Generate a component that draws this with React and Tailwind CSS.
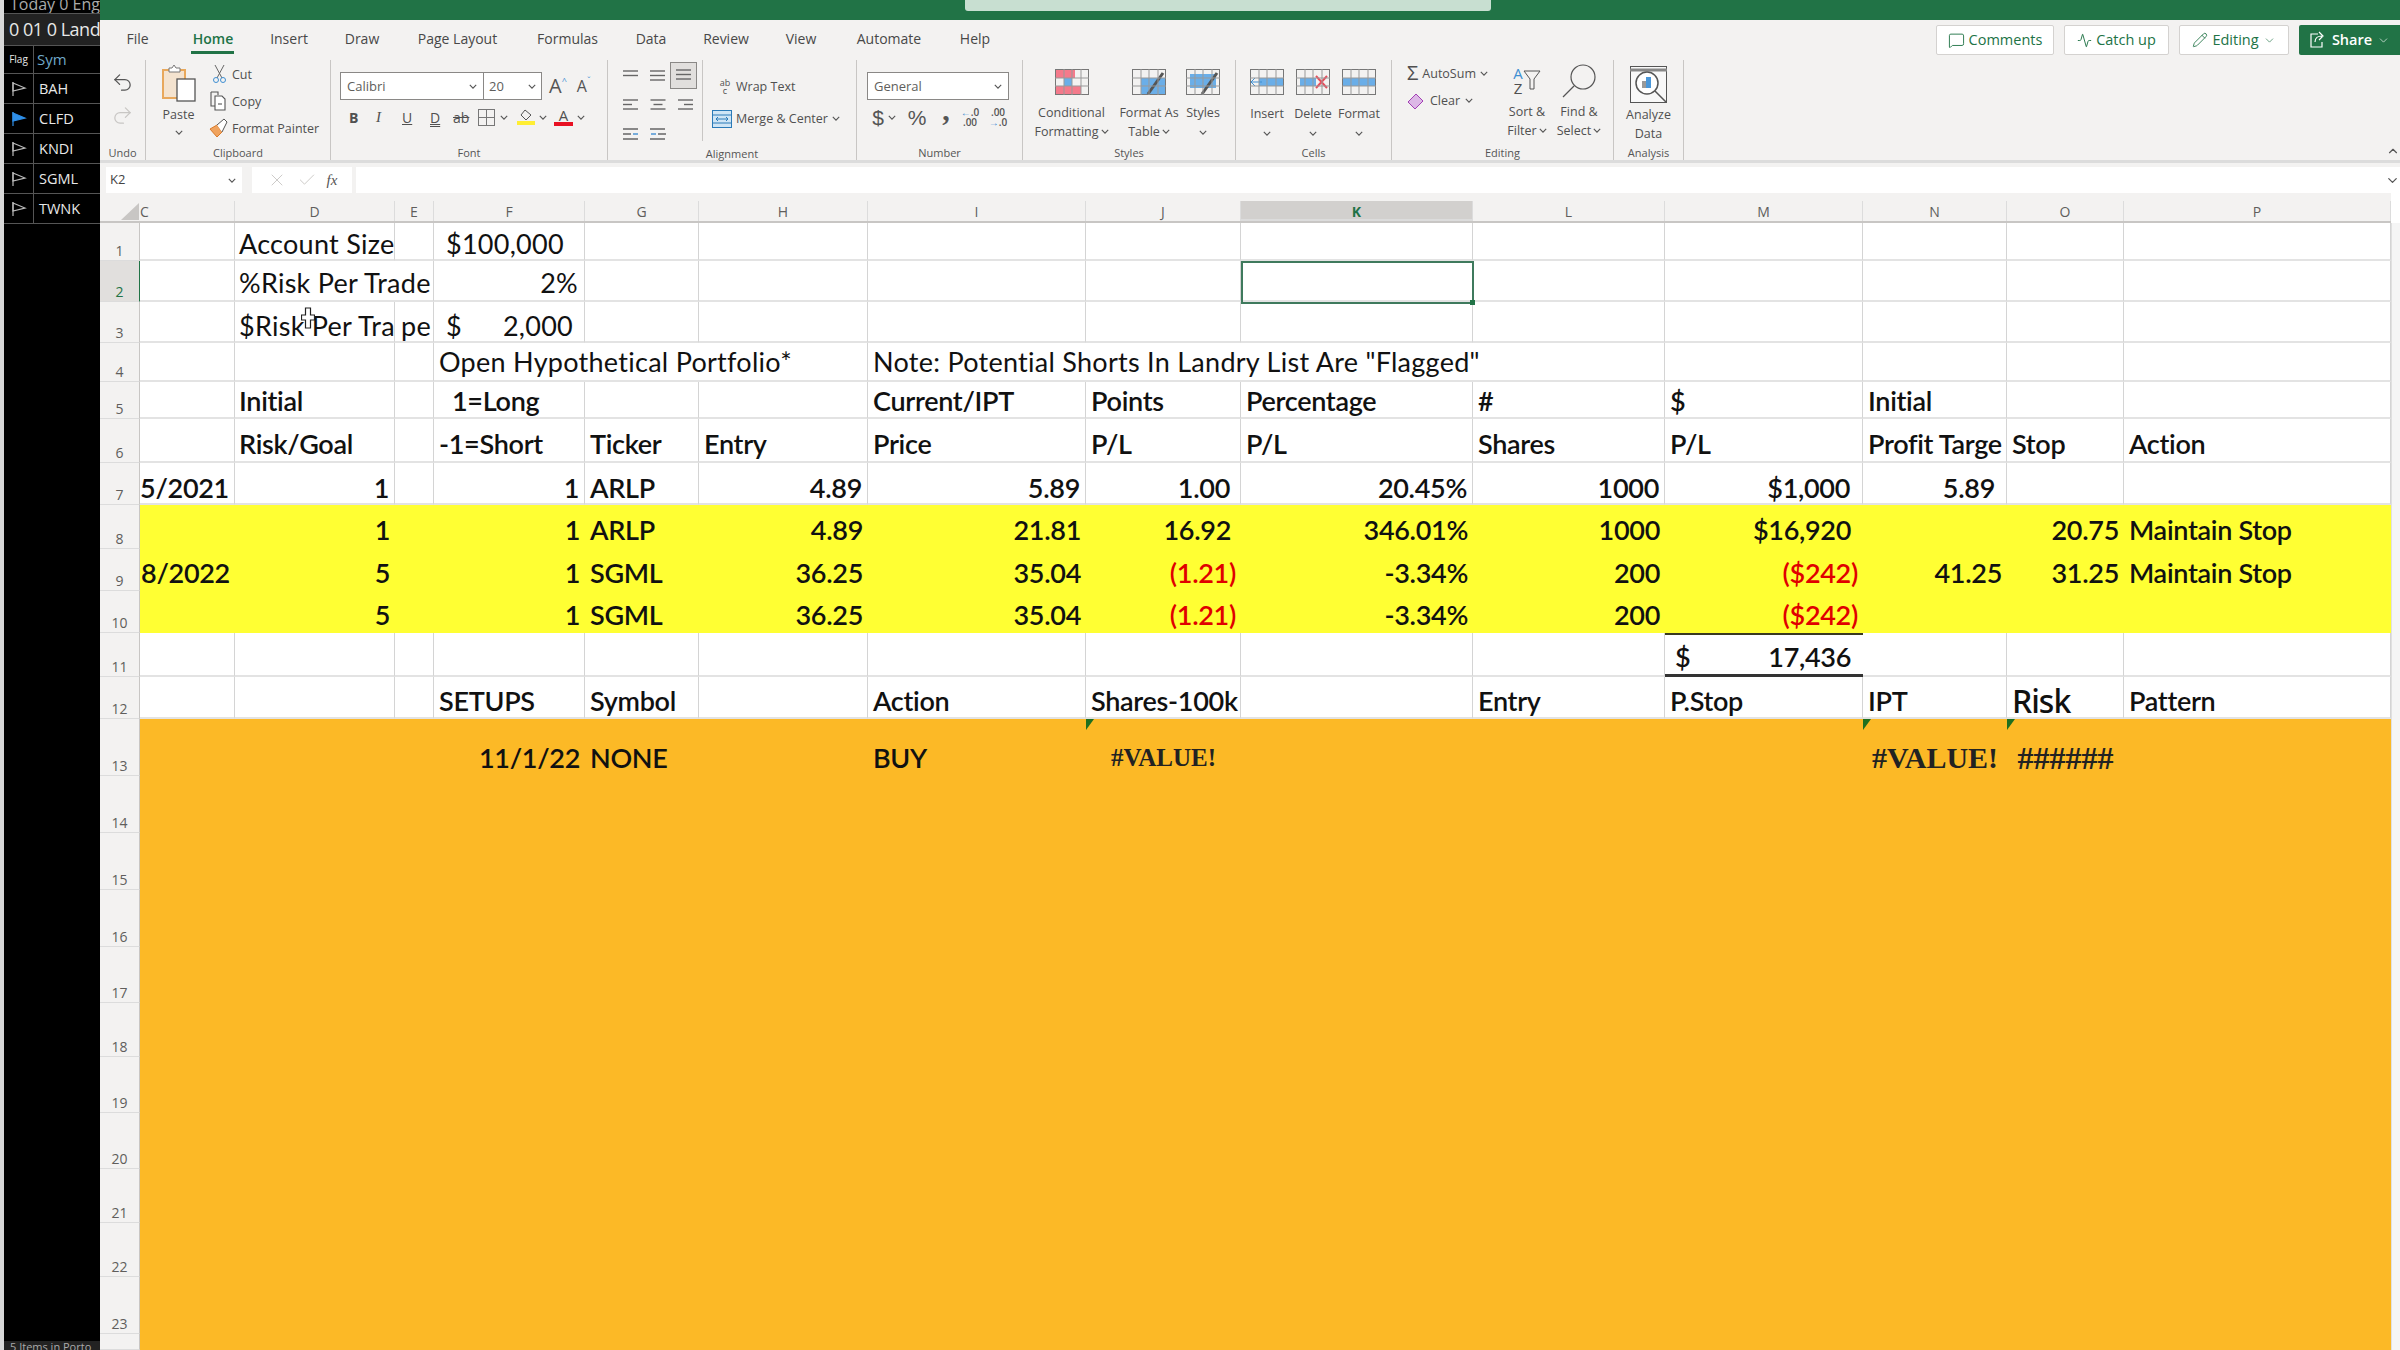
import React from 'react';
import { MessageSquare, Activity, Pencil, ChevronDown, ChevronUp, Undo2, Redo2, X, Check } from 'lucide-react';

const Chev = ({ c = '' }) => (
  <svg viewBox="0 0 10 6" className={'w-[8px] h-[5px] shrink-0 ' + c} fill="none" stroke="#555" strokeWidth="1.4"><path d="M1 1l4 4 4-4" /></svg>
);

const Lines = ({ w = [15, 15, 15], align = 'l' }) => (
  <svg width="16" height="14" viewBox="0 0 16 14" stroke="#666" strokeWidth="1.4">
    {w.map((n, i) => {
      const x = align === 'l' ? 0 : align === 'r' ? 16 - n : (16 - n) / 2;
      return <line key={i} x1={x} x2={x + n} y1={2 + i * 4.5} y2={2 + i * 4.5} />;
    })}
  </svg>
);

const Grid = ({ cls = 'w-[34px] h-[26px]', children, vb = '0 0 34 26' }) => (
  <svg viewBox={vb} className={cls} fill="none">
    {children}
    <rect x="0.5" y="0.5" width="33" height="25" stroke="#777" />
    <path d="M0 9h34M0 17h34M9 0v26M17 0v26M26 0v26" stroke="#999" />
  </svg>
);

const Group = ({ w, label, children }) => (
  <div className={'flex flex-col border-r border-[#c8c6c4] ' + w}>
    <div className="h-[87px] flex">{children}</div>
    <div className="h-[14px] text-center text-[11px] leading-[14px] text-[#555]">{label}</div>
  </div>
);

const tabs = [
  ['File', 'w-[75px]'], ['Home', 'w-[76px]'], ['Insert', 'w-[76px]'], ['Draw', 'w-[70px]'], ['Page Layout', 'w-[121px]'],
  ['Formulas', 'w-[99px]'], ['Data', 'w-[68px]'], ['Review', 'w-[82px]'], ['View', 'w-[68px]'], ['Automate', 'w-[108px]'], ['Help', 'w-[64px]'],
];

function Ribbon() {
  return (
    <div className="h-[143px] bg-[#f3f2f1] flex flex-col text-[#505050] shrink-0 border-b-[3px] border-[#dcdcdc]">
      <div className="h-[40px] flex shrink-0">
        {tabs.map(([t, w]) => (
          <div key={t} className={'relative h-[36px] flex justify-center items-center text-[14px] ' + w + (t === 'Home' ? ' text-[#217346] font-semibold' : ' text-[#484848]')}>
            {t}
            {t === 'Home' && <div className="absolute bottom-[2px] left-[16px] right-[17px] h-[3px] bg-[#217346]" />}
          </div>
        ))}
        <div className="ml-auto flex gap-[10px] mt-[5px] h-[30px] text-[14.5px] text-[#217346]">
          <div className="w-[118px] bg-white border border-[#d4d2d0] rounded-[2px] flex items-center justify-center gap-[4px]"><MessageSquare size={17} strokeWidth={1.3} />Comments</div>
          <div className="w-[105px] bg-white border border-[#d4d2d0] rounded-[2px] flex items-center justify-center gap-[4px]"><Activity size={15} strokeWidth={1.5} />Catch up</div>
          <div className="w-[110px] bg-white border border-[#d4d2d0] rounded-[2px] flex items-center justify-center gap-[4px]"><Pencil size={16} strokeWidth={1.3} />Editing<ChevronDown size={13} strokeWidth={1.2} /></div>
          <div className="w-[101px] bg-[#217346] text-white font-semibold rounded-l-[2px] flex items-center justify-center gap-[5px]">
            <svg width="18" height="18" viewBox="0 0 18 18" fill="none" stroke="#fff" strokeWidth="1.2"><path d="M9 3H2v13h11v-5M6 11c0-4 3-6 7-6M10 1l4 4-4 4" /></svg>
            Share<ChevronDown size={13} strokeWidth={1.2} />
          </div>
        </div>
      </div>
      <div className="h-[100px] flex text-[12.5px] leading-[19px]">
        <Group w="w-[46px]" label="Undo">
          <div className="w-full flex flex-col items-center pt-[11px] gap-[10px]">
            <Undo2 size={23} strokeWidth={1.3} color="#555" />
            <Redo2 size={23} strokeWidth={1.3} color="#c8c6c4" />
          </div>
        </Group>
        <Group w="w-[185px]" label="Clipboard">
          <div className="w-[64px] flex flex-col items-center pl-[1px] pt-[4px]">
            <svg width="36" height="38" viewBox="0 0 36 38" fill="none">
              <rect x="2" y="6" width="22" height="28" fill="#f4e3cf" stroke="#e8a85c" strokeWidth="2" />
              <path d="M8 7V4h3l2-3 2 3h4v4H8z" fill="#fff" stroke="#777" />
              <rect x="16" y="15" width="18" height="22" fill="#fff" stroke="#555" strokeWidth="1.3" />
            </svg>
            <div className="mt-[5px] leading-[16px]">Paste</div>
            <Chev c="mt-[7px]" />
          </div>
          <div className="flex flex-col pt-[4px] gap-[7px] whitespace-nowrap">
            <div className="flex items-center gap-[5px] pl-[2px]">
              <svg width="15" height="20" viewBox="0 0 15 20" fill="none"><path d="M3 1l7 13M12 1L5 14" stroke="#666" /><circle cx="4" cy="16" r="2.5" stroke="#3f8fd2" /><circle cx="11" cy="16" r="2.5" stroke="#3f8fd2" /></svg>Cut
            </div>
            <div className="flex items-center gap-[5px]">
              <svg width="17" height="20" viewBox="0 0 17 20" fill="none" stroke="#555" strokeWidth="1.1"><path d="M1 1h7v3M1 1v14h4" /><path d="M5 5h7l3 3v11H5z" fill="#fff" /><path d="M8 13h4" /></svg>Copy
            </div>
            <div className="flex items-center gap-[3px] -ml-[1px]">
              <svg width="20" height="20" viewBox="0 0 20 20" fill="none"><path d="M1 11l7-4 5 7-5 5z" fill="#f0a35e" stroke="#d97a2b" /><path d="M8 7l7-6 3 3-5 10" stroke="#555" fill="#fff" /></svg>Format Painter
            </div>
          </div>
        </Group>
        <Group w="w-[277px]" label="Font">
          <div className="pl-[9px] pt-[12px] flex flex-col">
            <div className="flex items-center">
              <div className="w-[202px] h-[28px] bg-white border border-[#8a8886] flex items-center text-[13px] text-[#605e5c]">
                <div className="w-[143px] h-full flex items-center justify-between pl-[6px] pr-[6px] border-r border-[#8a8886]">Calibri<Chev /></div>
                <div className="flex-1 flex items-center justify-between pl-[5px] pr-[5px]">20<Chev /></div>
              </div>
              <div className="ml-[7px] text-[20px] leading-[20px] text-[#555] flex items-start">A<span className="text-[9px] leading-[9px] text-[#3f8fd2]">^</span></div>
              <div className="ml-[10px] text-[16px] leading-[20px] text-[#555] flex items-start">A<span className="text-[9px] leading-[9px] text-[#3f8fd2]">ˇ</span></div>
            </div>
            <div className="flex items-center mt-[4px] h-[26px] text-[14px] text-[#505050]">
              <span className="w-[26px] pl-[9px] font-bold">B</span>
              <span className="w-[27px] pl-[10px] italic font-['Liberation_Serif',serif] text-[15px]">I</span>
              <span className="w-[28px] pl-[9px] underline">U</span>
              <span className="w-[26px] pl-[9px] underline decoration-double">D</span>
              <span className="w-[30px] pl-[6px] line-through">ab</span>
              <svg width="17" height="17" viewBox="0 0 17 17" fill="none" stroke="#777" className="ml-[1px]"><rect x=".5" y=".5" width="16" height="16" /><path d="M8.5 0v17M0 8.5h17" /></svg>
              <Chev c="ml-[5px]" />
              <div className="ml-[9px] w-[18px] flex flex-col items-center">
                <svg width="14" height="12" viewBox="0 0 14 12" fill="none" stroke="#555"><path d="M6 1l6 5-5 5-5-5z" /></svg>
                <div className="w-[18px] h-[4px] bg-[#ffee33]" />
              </div>
              <Chev c="ml-[4px]" />
              <div className="ml-[7px] w-[19px] flex flex-col items-center leading-[13px] text-[15px]">A<div className="w-[19px] h-[4px] bg-[#e81123]" /></div>
              <Chev c="ml-[4px]" />
            </div>
          </div>
        </Group>
        <Group w="w-[249px]" label="Alignment">
          <div className="pl-[15px] pt-[1px] w-[95px] border-r border-[#c8c6c4] mb-[6px] shrink-0">
            <div className="grid grid-cols-[27px_27px_27px] grid-rows-[29px_30px_28px] items-center">
              <Lines w={[15, 15, 0]} />
              <Lines w={[15, 15, 15]} />
              <div className="-ml-[7px] -mt-[1px] w-[27px] h-[27px] bg-[#e1dfdd] border border-[#8a8886] flex items-center justify-center"><Lines w={[15, 15, 15]} /></div>
              <Lines w={[15, 9, 15]} />
              <Lines w={[15, 9, 15]} align="c" />
              <Lines w={[15, 9, 15]} align="r" />
              <svg width="16" height="14" viewBox="0 0 16 14" stroke="#666" strokeWidth="1.4"><path d="M0 2h15M0 7h8M0 12h15" /><path d="M15 7h-5" stroke="#3f8fd2" /></svg>
              <svg width="16" height="14" viewBox="0 0 16 14" stroke="#666" strokeWidth="1.4"><path d="M0 2h15M8 7h8M0 12h15" /><path d="M1 7h5" stroke="#3f8fd2" /></svg>
            </div>
          </div>
          <div className="flex flex-col pl-[9px] pt-[17px] gap-[13px] whitespace-nowrap">
            <div className="flex items-center gap-[4px] pl-[6px]">
              <span className="text-[9px] leading-[8px] w-[14px] text-center">ab<br />c</span>Wrap Text
            </div>
            <div className="flex items-center gap-[4px]">
              <svg width="20" height="18" viewBox="0 0 20 18" fill="#cfe5f5" stroke="#2a7ab8"><rect x=".5" y=".5" width="19" height="17" /><path d="M0 5h20M0 13h20M4 9h12M6 7L4 9l2 2M14 7l2 2-2 2" fill="none" /></svg>
              Merge &amp; Center<Chev />
            </div>
          </div>
        </Group>
        <Group w="w-[166px]" label="Number">
          <div className="pl-[10px] pt-[12px] flex flex-col">
            <div className="w-[142px] h-[28px] bg-white border border-[#8a8886] flex items-center justify-between pl-[6px] pr-[6px] text-[13px] text-[#605e5c]">General<Chev /></div>
            <div className="flex items-center mt-[4px] h-[26px] text-[#555]">
              <span className="text-[21px] w-[22px] text-center font-['Liberation_Sans',sans-serif]">$</span>
              <Chev c="ml-[-1px]" />
              <span className="text-[21px] w-[42px] text-center font-['Liberation_Sans',sans-serif] font-light">%</span>
              <span className="text-[30px] leading-[18px] w-[16px] text-center font-bold font-['Liberation_Serif',serif] -mt-[14px]">,</span>
              <span className="ml-[5px] text-[10px] font-semibold leading-[10px] w-[22px] text-center"><span className="text-[#3f8fd2]">←</span>.0<br />.00</span>
              <span className="ml-[6px] text-[10px] font-semibold leading-[10px] w-[22px] text-center">.00<br /><span className="text-[#3f8fd2]">→</span>.0</span>
            </div>
          </div>
        </Group>
        <Group w="w-[213px]" label="Styles">
          <div className="w-full flex text-center leading-[19px]">
            <div className="w-[97px] flex flex-col items-center pt-[9px] shrink-0">
              <Grid><rect x="0" y="0" width="20" height="9" fill="#f47a8b" /><rect x="9" y="9" width="8" height="8" fill="#6aaee8" /><rect x="0" y="17" width="26" height="9" fill="#f47a8b" /></Grid>
              <div className="mt-[8px] whitespace-nowrap">Conditional</div>
              <div className="flex items-center gap-[2px] whitespace-nowrap">Formatting<Chev /></div>
            </div>
            <div className="w-[58px] flex flex-col items-center pt-[9px] shrink-0">
              <Grid><rect x="9" y="9" width="25" height="17" fill="#6aaee8" /><path d="M16 25L31 4" stroke="#555" strokeWidth="3" /></Grid>
              <div className="mt-[8px] whitespace-nowrap">Format As</div>
              <div className="flex items-center gap-[2px] whitespace-nowrap">Table<Chev /></div>
            </div>
            <div className="w-[50px] flex flex-col items-center pt-[9px] shrink-0">
              <Grid><rect x="4" y="5" width="26" height="14" fill="#6aaee8" /><path d="M16 25L31 4" stroke="#555" strokeWidth="3" /></Grid>
              <div className="mt-[8px]">Styles</div>
              <Chev c="mt-[8px]" />
            </div>
          </div>
        </Group>
        <Group w="w-[156px]" label="Cells">
          <div className="w-full flex text-center pl-[8px]">
            {[
              ['Insert', <Grid key="i"><rect x="9" y="9" width="25" height="8" fill="#6aaee8" /><path d="M0 13h12M5 9l-4 4 4 4" stroke="#3f8fd2" /></Grid>],
              ['Delete', <Grid key="d"><rect x="4" y="9" width="16" height="8" fill="#6aaee8" /><path d="M20 7l11 12M31 7L20 19" stroke="#ea4a5a" strokeWidth="2" /></Grid>],
              ['Format', <Grid key="f"><rect x="0" y="9" width="34" height="8" fill="#6aaee8" /></Grid>],
            ].map(([t, ic]) => (
              <div key={t} className="w-[46px] flex flex-col items-center pt-[9px] shrink-0">
                {ic}
                <div className="mt-[9px]">{t}</div>
                <Chev c="mt-[8px]" />
              </div>
            ))}
          </div>
        </Group>
        <Group w="w-[222px]" label="Editing">
          <div className="w-[108px] pl-[15px] pt-[3px] flex flex-col gap-[8px] shrink-0 whitespace-nowrap">
            <div className="flex items-center gap-[4px]"><span className="text-[20px] leading-[20px]">Σ</span>AutoSum<Chev /></div>
            <div className="flex items-center gap-[5px]">
              <svg width="18" height="18" viewBox="0 0 18 18" fill="#dcb8e6" stroke="#a33fb5"><path d="M1 10l8-8 7 7-8 8z" /></svg>Clear<Chev />
            </div>
          </div>
          <div className="w-[54px] flex flex-col items-center pt-[3px] shrink-0">
            <div className="flex h-[35px] items-center">
              <div className="text-[15px] leading-[15px] text-center"><span className="text-[#3f8fd2]">A</span><br />Z</div>
              <svg width="18" height="22" viewBox="0 0 18 22" fill="none" stroke="#555"><path d="M1 1h16l-6 8v10H7V9z" /></svg>
            </div>
            <div className="mt-[4px]">Sort &amp;</div>
            <div className="flex items-center gap-[2px]">Filter<Chev /></div>
          </div>
          <div className="w-[50px] flex flex-col items-center pt-[3px] shrink-0">
            <svg width="35" height="35" viewBox="0 0 35 35" fill="none" stroke="#555" strokeWidth="1.2"><circle cx="21" cy="14" r="12" /><path d="M12 23L1 34" /></svg>
            <div className="mt-[4px]">Find &amp;</div>
            <div className="flex items-center gap-[2px]">Select<Chev /></div>
          </div>
        </Group>
        <Group w="w-[70px]" label="Analysis">
          <div className="w-full flex flex-col items-center pt-[6px] text-center">
            <svg width="37" height="37" viewBox="0 0 37 37" fill="none" stroke="#555">
              <rect x=".5" y=".5" width="36" height="36" fill="#f8f8f8" />
              <path d="M0 4h37" stroke="#888" strokeWidth="3" />
              <circle cx="17" cy="17" r="11" fill="#fff" strokeWidth="1.5" />
              <rect x="12" y="15" width="4" height="7" fill="#999" stroke="none" /><rect x="16" y="11" width="5" height="11" fill="#4a96d8" stroke="none" />
              <path d="M25 25l11 11" strokeWidth="1.5" />
            </svg>
            <div className="mt-[2px]">Analyze</div>
            <div>Data</div>
          </div>
        </Group>
        <div className="flex-1 flex flex-col justify-end items-end pb-[2px]"><ChevronUp size={14} color="#555" /></div>
      </div>
    </div>
  );
}

function FormulaBar() {
  return (
    <div className="h-[30px] bg-[#f3f2f1] flex items-stretch pt-[4px] shrink-0">
      <div className="ml-[6px] w-[136px] bg-white flex items-center justify-between pl-[4px] pr-[6px] text-[13px] text-[#444]">K2<Chev /></div>
      <div className="ml-[10px] w-[100px] bg-white flex items-center justify-center gap-[10px] text-[#c8c6c4]">
        <X size={20} strokeWidth={1.1} /><Check size={20} strokeWidth={1.1} />
        <span className="text-[#555] italic font-['Liberation_Serif',serif] text-[15px]">fx</span>
      </div>
      <div className="ml-[4px] flex-1 bg-white flex items-center justify-end"><ChevronDown size={15} color="#555" /></div>
    </div>
  );
}

const cols = ['C', 'D', 'E', 'F', 'G', 'H', 'I', 'J', 'K', 'L', 'M', 'N', 'O', 'P'];
const rowNums = Array.from({ length: 24 }, (_, i) => i + 1);

const R = 'r', L = 'l';
const REG = 'font-normal tracking-[0.27px]';
const RED = 'text-[#e00000]';
const data = {
  1: { D: ['Account Size', L, REG + ' !pl-[4px]'], F: ['$100,000', L, REG + ' !pl-[12px]'] },
  2: { D: ['%Risk Per Trade', L, REG + ' !pl-[4px]', true], F: ['2%', R, REG + ' !pr-[6px]'] },
  3: { D: ['$Risk Per Tra', L, REG + ' !pl-[4px]'], E: ['pe', L, REG + ' !pl-[6px]'], F: ['$', L, REG + ' !pl-[12px]', false, '2,000'] },
  4: { F: ['Open Hypothetical Portfolio*', L, REG, true], G: ['', L, '', true], I: ['Note: Potential Shorts In Landry List Are "Flagged"', L, REG, true], J: ['', L, '', true], K: ['', L, '', true] },
  5: { D: ['Initial', L, '!pl-[4px]'], F: ['1=Long', L, '!pl-[18px]'], I: ['Current/IPT'], J: ['Points'], K: ['Percentage'], L: ['#'], M: ['$'], N: ['Initial'] },
  6: { D: ['Risk/Goal', L, '!pl-[4px]'], F: ['-1=Short'], G: ['Ticker'], H: ['Entry'], I: ['Price'], J: ['P/L'], K: ['P/L'], L: ['Shares'], M: ['P/L'], N: ['Profit Targe', L, 'overflow-hidden'], O: ['Stop'], P: ['Action'] },
  7: { C: ['5/2021', R, 'overflow-hidden'], D: ['1', R], F: ['1', R], G: ['ARLP'], H: ['4.89', R], I: ['5.89', R], J: ['1.00', R, '!pr-[10px]'], K: ['20.45%', R], L: ['1000', R], M: ['$1,000', R, '!pr-[12px]'], N: ['5.89', R, '!pr-[11px]'] },
  8: { D: ['1', R], F: ['1', R], G: ['ARLP'], H: ['4.89', R], I: ['21.81', R], J: ['16.92', R, '!pr-[10px]'], K: ['346.01%', R], L: ['1000', R], M: ['$16,920', R, '!pr-[12px]'], O: ['20.75', R], P: ['Maintain Stop'] },
  9: { C: ['8/2022', R], D: ['5', R], F: ['1', R], G: ['SGML'], H: ['36.25', R], I: ['35.04', R], J: ['(1.21)', R, RED], K: ['-3.34%', R], L: ['200', R], M: ['($242)', R, RED], N: ['41.25', R], O: ['31.25', R], P: ['Maintain Stop'] },
  10: { D: ['5', R], F: ['1', R], G: ['SGML'], H: ['36.25', R], I: ['35.04', R], J: ['(1.21)', R, RED], K: ['-3.34%', R], L: ['200', R], M: ['($242)', R, RED] },
  12: { F: ['SETUPS'], G: ['Symbol'], I: ['Action'], J: ['Shares-100k'], L: ['Entry'], M: ['P.Stop'], N: ['IPT'], O: ['Risk', L, "text-[32px] font-['Noto_Sans',sans-serif] font-medium tracking-[-1px]"], P: ['Pattern'] },
  13: { F: ['11/1/22', R], G: ['NONE'], I: ['BUY'] },
};

const rowPb = { 1: 'pb-0', 2: 'pb-[2px]', 3: 'pb-0', 4: 'pb-[3px]', 5: 'pb-[1px]', 6: 'pb-[2px]', 7: 'pb-0', 8: 'pb-[4px]', 9: 'pb-[3px]', 10: 'pb-[3px]', 12: 'pb-[1px]', 13: 'pb-[3px]' };
const rowBg = (r) => (r >= 8 && r <= 10 ? 'bg-[#ffff33]' : r >= 13 ? 'bg-[#fcb926]' : 'bg-white');

const Tri = () => <div className="absolute left-0 top-0 w-0 h-0 border-t-[11px] border-t-[#1f6f1f] border-r-[8px] border-r-transparent" />;

const flagged = {
  J: 'text-[25px]',
  N: 'text-[30px]',
  O: 'text-[32px]',
};
const flagText = { J: '#VALUE!', N: '#VALUE!', O: '######' };

function Cell({ r, c }) {
  const d = (data[r] || {})[c];
  const isWhite = r < 8 || r === 11 || r === 12;
  const noRight = d && d[3];
  const border = isWhite ? 'border-b-2 border-b-[#e3e3e3] ' + (noRight ? '' : 'border-r border-r-[#d4d4d4]') : '';
  if (r === 11 && c === 'M') {
    return (
      <div className="bg-white border-t-2 border-t-[#3a3a20] border-b-[3px] border-b-[#333] flex items-end justify-between pl-[10px] pr-[12px] pb-[2px] whitespace-nowrap text-[#111] font-semibold">
        <span>$</span><span>17,436</span>
      </div>
    );
  }
  if (r === 13 && flagged[c]) {
    return (
      <div className={'relative flex items-end justify-center pb-[3px] ' + rowBg(r)}>
        <Tri />
        <span className={"font-['Liberation_Serif',serif] leading-[30px] font-bold text-[#222] tracking-normal " + flagged[c]}>{flagText[c]}</span>
      </div>
    );
  }
  const align = d && d[1] === R ? 'justify-end pr-[5px]' : 'justify-start pl-[5px]';
  const lift = noRight && d[0] ? ' relative z-10' : '';
  return (
    <div className={'flex items-end whitespace-nowrap min-w-0 ' + (rowPb[r] || '') + ' ' + rowBg(r) + ' ' + border + ' ' + align + ' ' + ((d && d[2] && d[2].includes('font-')) ? '' : 'font-semibold ') + ((d && d[2]) || '') + lift}>
      {d && d[0] !== '' && (d[4]
        ? <span className="flex justify-between w-full pr-[11px]"><span>{d[0]}</span><span>{d[4]}</span></span>
        : d[0])}
    </div>
  );
}

function Sheet() {
  return (
    <div className="relative flex-1 min-h-0 overflow-hidden bg-white grid grid-cols-[40px_95px_160px_39px_151px_114px_169px_218px_155px_232px_192px_198px_144px_117px_267px_9px] grid-rows-[30px_38px_41px_41px_39px_37px_44px_42px_44px_42px_42px_44px_42px_57px_57px_57px_57px_56px_54px_56px_56px_54px_54px_57px_16px] font-['Lato',sans-serif] text-[27px] leading-[30px] tracking-[-0.3px] text-[#111]">
      <div className="bg-[#f3f2f1] border-b-2 border-[#c8c6c4] relative">
        <svg width="18" height="17" viewBox="0 0 18 17" className="absolute right-[1px] bottom-[1px]"><path d="M18 0v17H0z" fill="#c8c6c4" /></svg>
      </div>
      {cols.map((c) => (
        <div key={c} className="bg-[#f3f2f1] border-b-2 border-[#c8c6c4] flex items-end font-['Open_Sans',sans-serif] text-[14px] leading-[18px] tracking-normal font-normal">
          <div className={'w-full h-[20px] flex border-r border-[#dcdcdc] pt-[2px] ' + (c === 'K' ? 'bg-[#d2d0ce] text-[#217346] font-bold border-b-2 border-[#217346] justify-center' : 'text-[#605e5c] ' + (c === 'C' ? 'justify-start' : 'justify-center'))}>{c}</div>
        </div>
      ))}
      <div className="bg-white" />
      {rowNums.map((r) => (
        <React.Fragment key={r}>
          <div className={"border-b border-r border-b-[#dcdcdc] border-r-[#c8c6c4] flex items-end justify-center font-['Open_Sans',sans-serif] text-[14px] leading-[16px] tracking-normal font-normal pb-[1px] " + (r === 2 ? 'bg-[#e1dfdd] text-[#217346] font-bold !border-r-[#217346]' : 'bg-[#f3f2f1] text-[#605e5c]')}>{r === 24 ? '' : r}</div>
          {cols.map((c) => <Cell key={c} r={r} c={c} />)}
          <div className="bg-[#f5f5f5] border-l border-[#e0e0e0]" />
        </React.Fragment>
      ))}
      <div className="absolute z-20 left-[1141px] top-[68px] w-[233px] h-[43px] border-2 border-[#3f7a5d]">
        <div className="absolute -right-[3px] -bottom-[3px] w-[5px] h-[5px] bg-[#217346]" />
      </div>
      <svg width="14" height="22" viewBox="0 0 14 22" className="absolute z-30 left-[201px] top-[114px]">
        <path d="M4.5 1h5v7h4v5h-4v8h-5v-8H.5V8h4z" fill="#fff" stroke="#222" strokeWidth="1.2" />
      </svg>
    </div>
  );
}

function Sidebar() {
  const rows = [['BAH', false], ['CLFD', true], ['KNDI', false], ['SGML', false], ['TWNK', false]];
  return (
    <div className="w-[100px] h-full shrink-0 bg-black border-l-[4px] border-l-[#d8d8d8] flex flex-col text-[#e8e8e8] overflow-hidden font-['Open_Sans',sans-serif]">
      <div className="h-[14px] border-b border-[#555] text-[16px] leading-[8px] text-[#aaa] pl-[6px] whitespace-nowrap overflow-hidden">Today 0 Eng</div>
      <div className="h-[32px] bg-[#222] border-b border-[#555] flex items-center pl-[5px] text-[18px] whitespace-nowrap tracking-[-0.5px] shrink-0">0 01 0 Land</div>
      <div className="h-[28px] border-b border-[#555] flex items-center shrink-0">
        <div className="w-[30px] h-full flex items-center justify-center border-r border-[#555] text-[10px]">Flag</div>
        <div className="pl-[3px] text-[15px] text-[#6fa8c8]">Sym</div>
      </div>
      {rows.map(([s, on]) => (
        <div key={s} className="h-[30px] border-b border-[#555] flex items-center shrink-0">
          <div className="w-[30px] h-full flex items-center justify-center border-r border-[#555]">
            <svg width="16" height="16" viewBox="0 0 16 16" fill={on ? '#2f8fe8' : 'none'} stroke={on ? '#2f8fe8' : '#bbb'} strokeWidth="1.2"><path d="M2 1v14" /><path d="M2 2l12 5-12 3z" /></svg>
          </div>
          <div className="pl-[5px] text-[14.5px] font-medium">{s}</div>
        </div>
      ))}
      <div className="flex-1" />
      <div className="h-[9px] bg-[#222] text-[11px] leading-[12px] text-[#aaa] pl-[6px] whitespace-nowrap overflow-hidden">5 Items in Porto</div>
    </div>
  );
}

export default function App() {
  return (
    <div className="w-[2400px] h-[1350px] flex overflow-hidden bg-white font-['Open_Sans',sans-serif]">
      <Sidebar />
      <div className="flex-1 min-w-0 flex flex-col">
        <div className="h-[20px] bg-[#217346] shrink-0 flex">
          <div className="ml-[865px] w-[526px] h-[11px] bg-[#c8dfd1] rounded-b-[3px]" />
        </div>
        <Ribbon />
        <FormulaBar />
        <Sheet />
      </div>
    </div>
  );
}
